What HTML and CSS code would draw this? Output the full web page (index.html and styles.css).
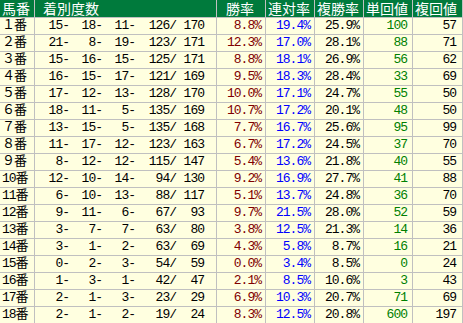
FILE: index.html
```html
<!DOCTYPE html>
<html lang="ja">
<head>
<meta charset="utf-8">
<link rel="stylesheet" href="styles.css">
</head>
<body>
<div class="tbl">
  <div class="row head">
    <div class="h">馬番</div>
    <div class="h h-wide">着別度数</div>
    <div class="h h-win">勝率</div>
    <div class="h">連対率</div>
    <div class="h">複勝率</div>
    <div class="h">単回値</div>
    <div class="h">複回値</div>
  </div>
</div>
<script src="app.js"></script>
</body>
</html>
```

FILE: app.js
```js
const data = [
  ["１番",15,18,11,126,170,"8.8%","19.4%","25.9%",100,57],
  ["２番",21,8,19,123,171,"12.3%","17.0%","28.1%",88,71],
  ["３番",15,16,15,125,171,"8.8%","18.1%","26.9%",56,62],
  ["４番",16,15,17,121,169,"9.5%","18.3%","28.4%",33,69],
  ["５番",17,12,13,128,170,"10.0%","17.1%","24.7%",55,50],
  ["６番",18,11,5,135,169,"10.7%","17.2%","20.1%",48,50],
  ["７番",13,15,5,135,168,"7.7%","16.7%","25.6%",95,99],
  ["８番",11,17,12,123,163,"6.7%","17.2%","24.5%",37,70],
  ["９番",8,12,12,115,147,"5.4%","13.6%","21.8%",40,55],
  ["10番",12,10,14,94,130,"9.2%","16.9%","27.7%",41,88],
  ["11番",6,10,13,88,117,"5.1%","13.7%","24.8%",36,70],
  ["12番",9,11,6,67,93,"9.7%","21.5%","28.0%",52,59],
  ["13番",3,7,7,63,80,"3.8%","12.5%","21.3%",14,36],
  ["14番",3,1,2,63,69,"4.3%","5.8%","8.7%",16,21],
  ["15番",0,2,3,54,59,"0.0%","3.4%","8.5%",0,24],
  ["16番",1,3,1,42,47,"2.1%","8.5%","10.6%",3,43],
  ["17番",2,1,3,23,29,"6.9%","10.3%","20.7%",71,69],
  ["18番",2,1,2,19,24,"8.3%","12.5%","20.8%",600,197]
];
const tbl = document.querySelector(".tbl");
for (const d of data) {
  const row = document.createElement("div");
  row.className = "row";
  row.innerHTML =
    `<div class="c name">${d[0]}</div>` +
    `<div class="c rec"><span class="f1">${d[1]}-</span><span class="f2">${d[2]}-</span><span class="f3">${d[3]}-</span><span class="f4">${d[4]}/</span><span class="f5">${d[5]}</span></div>` +
    `<div class="c num win">${d[6]}</div>` +
    `<div class="c num ren">${d[7]}</div>` +
    `<div class="c num fuku">${d[8]}</div>` +
    `<div class="c num tan">${d[9]}</div>` +
    `<div class="c num fk">${d[10]}</div>`;
  tbl.appendChild(row);
}
```

FILE: styles.css
```css
html, body {
  margin: 0;
  padding: 0;
  background: #ffffe0;
}
.tbl {
  display: grid;
  grid-template-columns: 34px 181px 48px 48px 48px 48px 49px;
  grid-template-rows: 17px;
  grid-auto-rows: 16px;
  gap: 1px;
  padding-right: 1px;
  background: #c0c0c0;
  width: 463px;
  box-sizing: border-box;
  font-family: "Liberation Mono", "Noto Sans CJK JP", monospace;
  font-size: 13px;
}
.row {
  display: contents;
}
.h {
  background: #007a3c;
  color: #ffffff;
  font-family: "Noto Sans CJK JP", sans-serif;
  font-size: 14px;
  line-height: 17px;
  padding-left: 2px;
  white-space: nowrap;
}
.h-wide {
  padding-left: 8px;
}
.h-win {
  padding-left: 9px;
}
.c {
  background: #ffffe0;
  line-height: 16px;
  color: #000;
  white-space: nowrap;
}
.name {
  font-family: "Liberation Mono", "Noto Sans CJK JP", monospace;
  font-size: 13px;
  padding-left: 2px;
  letter-spacing: -1px;
}
.rec {
  display: flex;
  letter-spacing: -1px;
}
.rec span {
  display: block;
  text-align: right;
}
.f1 { width: 34px; }
.f2 { width: 33px; }
.f3 { width: 33px; }
.f4 { width: 41px; }
.f5 { width: 28px; }
.num {
  text-align: right;
  letter-spacing: -1px;
  padding-right: 4px;
}
.win { color: #800000; }
.ren { color: #0000ff; }
.fuku { color: #000; }
.tan { color: #008000; padding-right: 5px; }
.fk { color: #000; padding-right: 6px; }
```
